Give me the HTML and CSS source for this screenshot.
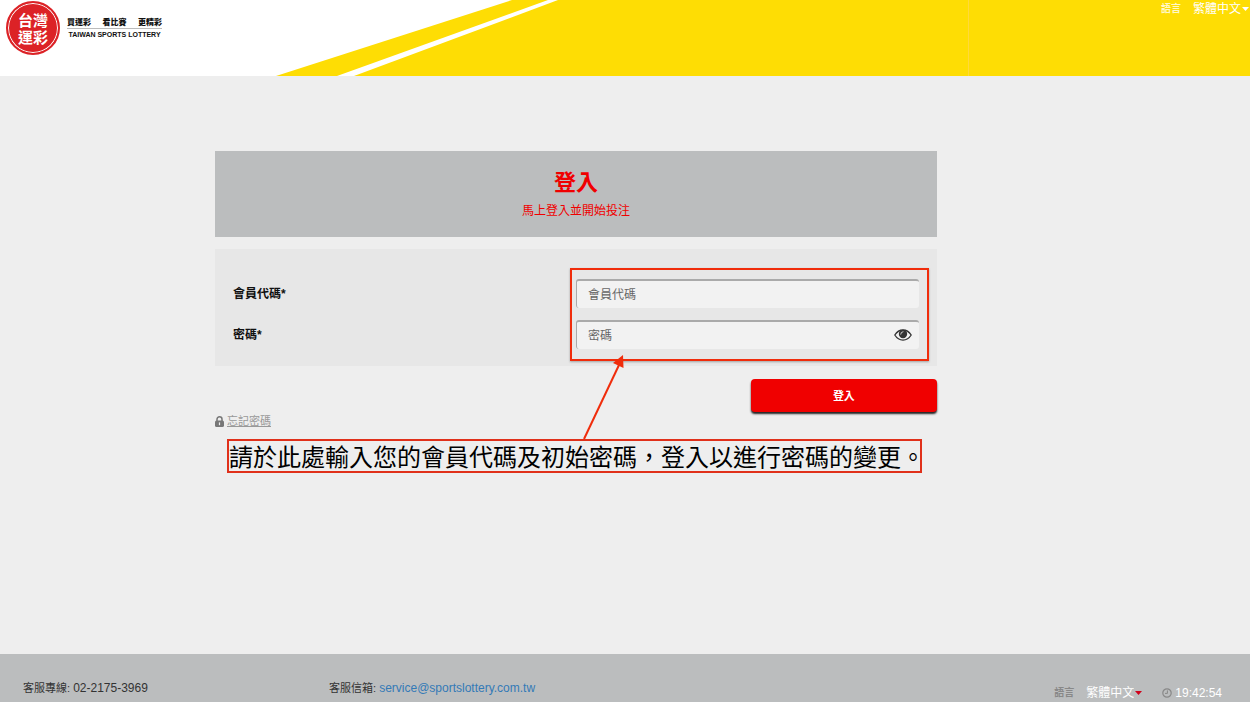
FILE: index.html
```html
<!DOCTYPE html>
<html lang="zh-Hant">
<head>
<meta charset="utf-8">
<meta name="viewport" content="width=device-width, initial-scale=1">
<title>台灣運彩 登入</title>
<link rel="stylesheet" href="styles.css">
</head>
<body>
<header class="site-header">
  <svg class="header-art" viewBox="0 0 560 76" aria-hidden="true">
    <path fill="#fff" d="M0 0H560V76H0z"/>
    <path fill="#fedd04" d="M276 76 512 0H548L337 76z"/>
    <path fill="#fedd04" d="M354 76 558 0H560V76z"/>
  </svg>
  <div class="header-seam" aria-hidden="true"></div>
  <a class="brand" href="#">
    <span class="brand-mark">
      <span class="mark-text">台灣</span>
      <span class="mark-text">運彩</span>
    </span>
    <span class="brand-copy">
      <span class="slogan"><span>買運彩</span><span>看比賽</span><span>更精彩</span></span>
      <span class="brand-en">TAIWAN SPORTS LOTTERY</span>
    </span>
  </a>
  <div class="language">
    <label class="language-label" for="lang-top">語言</label>
    <span class="language-pick">
      <select id="lang-top" class="language-select"><option>繁體中文</option></select>
      <svg class="caret" viewBox="0 0 7 4" aria-hidden="true"><path d="M0 0h7L3.5 4z"/></svg>
    </span>
  </div>
</header>

<main class="page">
  <form class="login">
    <div class="banner">
      <h1 class="title">登入</h1>
      <p class="subtitle">馬上登入並開始投注</p>
    </div>
    <div class="card">
      <div class="row">
        <label class="field-label" for="member">會員代碼*</label>
        <input class="field" id="member" type="text" placeholder="會員代碼">
      </div>
      <div class="row">
        <label class="field-label" for="password">密碼*</label>
        <span class="password">
          <input class="field" id="password" type="password" placeholder="密碼">
          <button class="reveal" type="button" aria-label="顯示密碼">
            <svg viewBox="0 0 18 12" aria-hidden="true">
              <path d="M.8 6C5 -.7 13 -.7 17.2 6 13 12.7 5 12.7.8 6z" fill="none" stroke="#333" stroke-width="1.3"/>
              <circle cx="9" cy="5" r="4.2" fill="#333"/>
              <path d="M6.7 5.2A2.5 2.5 0 0 1 9 2.7" fill="none" stroke="#f2f2f2" stroke-width=".8" stroke-linecap="round"/>
            </svg>
          </button>
        </span>
      </div>
      <div class="highlight" aria-hidden="true"></div>
      <svg class="arrow" viewBox="0 0 60 86" aria-hidden="true">
        <path d="M8 84 43 10" fill="none" stroke="#f02c0b" stroke-width="2"/>
        <path d="M47 0 47.5 13 37 8z" fill="#f02c0b"/>
      </svg>
    </div>
    <div class="actions">
      <a class="forgot" href="#">
        <svg class="lock" viewBox="0 0 9 11" aria-hidden="true">
          <path d="M2 5.5V3.3a2.5 2.5 0 0 1 5 0v2.2" fill="none" stroke="#777" stroke-width="1.5"/>
          <rect y="4.6" width="9" height="6.4" rx="1.6" fill="#777"/>
          <path d="M4.5 6.4v2.8" stroke="#eee" stroke-width="1.2"/>
        </svg>
        <span class="forgot-text">忘記密碼</span>
      </a>
      <button class="submit" type="submit">登入</button>
    </div>
    <p class="note">請於此處輸入您的會員代碼及初始密碼，登入以進行密碼的變更。</p>
  </form>
</main>

<footer class="site-footer">
  <p class="contact phone">客服專線: <span class="contact-value">02-2175-3969</span></p>
  <p class="contact">客服信箱: <a class="contact-value mail" href="mailto:service@sportslottery.com.tw">service@sportslottery.com.tw</a></p>
  <div class="footer-tools">
    <div class="language">
      <label class="language-label" for="lang-bottom">語言</label>
      <span class="language-pick">
        <select id="lang-bottom" class="language-select"><option>繁體中文</option></select>
        <svg class="caret" viewBox="0 0 7 4" aria-hidden="true"><path d="M0 0h7L3.5 4z"/></svg>
      </span>
    </div>
    <div class="clock">
      <svg class="clock-icon" viewBox="0 0 10 10" aria-hidden="true">
        <circle cx="5" cy="5" r="4.2" fill="none" stroke="#888" stroke-width="1.2"/>
        <path d="M5.4 2.4v3H3" fill="none" stroke="#888" stroke-width="1"/>
      </svg>
      <time>19:42:54</time>
    </div>
  </div>
</footer>
</body>
</html>
```
FILE: styles.css
```css
* { box-sizing: border-box; }

body {
  margin: 0;
  min-height: 100vh;
  display: flex;
  flex-direction: column;
  background: #eee;
  color: #333;
  font: 12px/16px "Liberation Sans", "Noto Sans CJK TC", sans-serif;
}

p, h1 { margin: 0; }
a { color: inherit; }
button, input, select { font: inherit; }

.site-header {
  position: relative;
  display: flex;
  justify-content: space-between;
  align-items: flex-start;
  height: 76px;
  background: #fedd04;
}

.header-art {
  position: absolute;
  top: 0;
  left: 0;
  width: 560px;
  height: 76px;
}

.header-seam {
  position: absolute;
  top: 0;
  bottom: 0;
  right: 281px;
  width: 1px;
  background: #ffd93a;
}

.brand {
  position: relative;
  display: flex;
  gap: 7px;
  padding: 1px 0 0 6px;
  color: #111;
  text-decoration: none;
}

.brand-mark {
  display: flex;
  flex-direction: column;
  align-items: center;
  justify-content: center;
  width: 54px;
  height: 54px;
  border: 2px solid #dc2226;
  border-radius: 50%;
  background: #dc2226;
  box-shadow: inset 0 0 0 1px #fff;
  color: #fff;
}

.mark-text { font: 700 15px/17px "Noto Sans CJK TC", sans-serif; }

.brand-copy {
  display: flex;
  flex-direction: column;
  align-self: flex-start;
  padding-top: 14px;
}

.slogan {
  display: flex;
  justify-content: space-between;
  width: 95px;
  border-bottom: 1px solid #bbb;
  font: 900 8px/13px "Noto Sans CJK TC", sans-serif;
}

.brand-en {
  padding-top: 1px;
  font: 700 7px/10px "Liberation Sans", sans-serif;
  text-align: center;
}

.language {
  position: relative;
  display: flex;
  align-items: center;
  gap: 12px;
}

.language-label {
  font-size: 10px;
  font-weight: 700;
}

.language-pick {
  display: flex;
  align-items: center;
  gap: 1px;
}

.language-select {
  appearance: none;
  width: 48px;
  height: 16px;
  padding: 0;
  border: 0;
  background: none;
  color: #fff;
}

.caret { width: 7px; height: 4px; fill: #fff; }

.site-header .language { padding: 1px 1px 0 0; color: #fff8c8; }

.page { flex: 1; padding: 75px 0 24px; }

.login {
  width: 57.75%;
  margin-left: 17.2%;
}

.banner {
  padding: 17px 0 18px;
  background: #bbbdbe;
  color: #f00000;
  text-align: center;
}

.title {
  font-size: 22px;
  line-height: 30px;
  font-weight: 700;
}

.subtitle { padding-top: 5px; }

.card {
  position: relative;
  display: grid;
  gap: 12px;
  margin-top: 12px;
  padding: 30px 18px 17px;
  background: #e7e7e7;
}

.row {
  display: grid;
  grid-template-columns: 1fr 1fr;
  align-items: center;
}

.field-label { color: #111; font-weight: 700; }

.field {
  width: 100%;
  height: 29px;
  padding: 0 11px;
  border: 0 solid #aaa;
  border-top-width: 2px;
  border-left-width: 1px;
  border-radius: 3px;
  background: #f2f2f2;
  color: #333;
}

.field::placeholder { color: #666; opacity: 1; }

.password { position: relative; display: block; }

.reveal {
  position: absolute;
  top: 0;
  right: 6px;
  display: flex;
  align-items: center;
  width: 20px;
  height: 29px;
  padding: 0 1px;
  border: 0;
  background: none;
}

.reveal svg { width: 18px; height: 12px; }

.highlight {
  position: absolute;
  top: 19px;
  left: calc(50% - 6px);
  right: 8px;
  bottom: 5px;
  border: 2px solid #f02c0b;
  box-shadow: 0 1px 2px rgba(0, 0, 0, .3);
  pointer-events: none;
}

.arrow {
  position: absolute;
  top: 106px;
  left: 50%;
  width: 60px;
  height: 86px;
  pointer-events: none;
}

.actions {
  display: flex;
  justify-content: space-between;
  align-items: flex-start;
  padding-top: 13px;
}

.forgot {
  display: flex;
  align-items: center;
  gap: 3px;
  padding-top: 34px;
  color: #999;
  font-size: 11px;
  text-decoration: none;
}

.forgot-text { text-decoration: underline; }
.lock { width: 9px; height: 11px; }

.submit {
  width: 186px;
  height: 33px;
  border: 0;
  border-radius: 4px;
  background: #f00000;
  box-shadow: 0 2px 2px #222;
  color: #fff;
  font-size: 11px;
  font-weight: 700;
}

.note {
  width: 695px;
  margin: 10px 0 0 12px;
  border: 2px solid #e0301a;
  color: #000;
  font: 24px/30px "Noto Sans CJK TC", sans-serif;
  white-space: nowrap;
}

.site-footer {
  display: grid;
  grid-template-columns: 306px 1fr auto;
  align-items: start;
  padding: 26px 28px 1px 23px;
  background: #bbbdbe;
}

.contact { font-size: 11px; line-height: 16px; }
.contact-value { font-size: 12px; }
.mail { color: #337ab7; text-decoration: none; }

.footer-tools {
  display: flex;
  gap: 20px;
  padding-top: 5px;
}

.footer-tools .language-label { color: #888; }
.footer-tools .caret { fill: #d0021b; }

.clock {
  display: flex;
  align-items: center;
  gap: 3px;
  color: #fff;
}

.clock-icon { width: 10px; height: 10px; }
```
